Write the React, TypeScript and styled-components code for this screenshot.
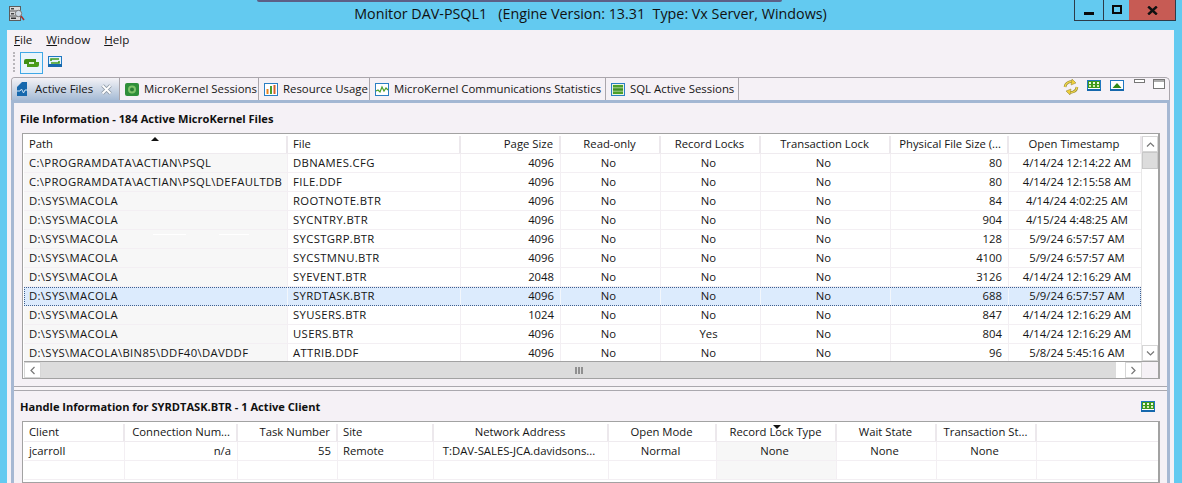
import React from "react";
import styled, { createGlobalStyle } from "styled-components";

const Global = createGlobalStyle`
  html, body { margin: 0; padding: 0; width: 1182px; height: 483px; overflow: hidden; background: #63caf0; }
  body { font-family: "Open Sans", "Liberation Sans", sans-serif; font-size: 11.3px; color: #151515; }
  * { box-sizing: border-box; }
`;

const Window = styled.div`display: flex; flex-direction: column; height: 483px; overflow: hidden; position: relative;`;
const Sliver = styled.div`position: absolute; left: 257px; top: 0; width: 525px; height: 2px; background: #5d5f86; border-radius: 0 0 2px 2px;`;
const TitleBar = styled.header`
  height: 30px; flex: none; display: grid; grid-template-columns: 1fr auto 1fr; align-items: start;
`;
const AppIcon = styled.div`padding: 6px 0 0 9px; line-height: 0;`;
const Title = styled.h1`
  margin: 0 1px 0 0; padding-top: 4px; font-size: 14.3px; line-height: 20px; font-weight: 400; color: #111; white-space: pre;
`;
const Controls = styled.div`justify-self: end; display: flex; height: 21px; margin-right: 6px; border: 1px solid #2d3b48; border-top: 0;`;
const Ctrl = styled.div<{ $w: number; $close?: boolean }>`
  width: ${p => p.$w}px; display: flex; align-items: center; justify-content: center;
  background: ${p => (p.$close ? "#c75b54" : "transparent")};
  border-left: ${p => (p.$close ? 0 : "1px solid #2d3b48")};
  &:first-child { border-left: 0; }
`;
const Body = styled.main`flex: 1; min-height: 0; margin: 0 8px 0 7px; background: #f5f1f6; display: flex; flex-direction: column; overflow: hidden;`;
const Menu = styled.nav`height: 20px; flex: none; display: flex; gap: 14px; padding: 0 0 2px 7px; align-items: center; font-size: 11.6px;`;
const MenuItem = styled.span`u { text-underline-offset: 1px; }`;
const Toolbar = styled.div`height: 24px; flex: none; display: flex; align-items: flex-start; padding: 2px 0 0 6px;`;
const Grip = styled.div`width: 3px; height: 20px; margin-right: 4px; border-left: 2px dotted #b9b6bb;`;
const ToolBtn = styled.div<{ $on?: boolean }>`
  width: 23px; height: 22px; display: flex; align-items: center; justify-content: center; line-height: 0;
  ${p => p.$on ? "border: 1px solid #3fa8e6; background: #e9f4fb;" : "margin-top: -2px;"}
`;

const Folder = styled.section`flex: 1; min-height: 0; margin: 3px 4px 0 4px; display: flex; flex-direction: column;`;
const TabBar = styled.div`
  height: 23px; flex: none; display: flex; border-top: 1px solid #aaa6ac; border-right: 1px solid #aaa6ac; border-radius: 4px 5px 0 0;
  border-left: 1px solid #aaa6ac;
`;
const Tab = styled.div<{ $w: number; $active?: boolean }>`
  width: ${p => p.$w}px; flex: none; display: flex; align-items: center; gap: ${p => p.$active ? 6 : 5}px; padding-left: 5px; white-space: nowrap;
  border-right: 1px solid #aaa6ac; font-size: 11.4px;
  ${p => p.$active ? "background: linear-gradient(#f3f2f6, #a6bcd6); border-radius: 3px 0 0 0;" : ""}
`;
const TabLabel = styled.span`margin-top: -1px;`;
const TabActions = styled.div`flex: 1; display: flex; justify-content: flex-end; align-items: flex-start; padding: 1px 4px 0 0; line-height: 0;`;
const ActionIcon = styled.span<{ $ml?: number; $mt?: number }>`margin-left: ${p => p.$ml ?? 0}px; margin-top: ${p => p.$mt ?? 0}px;`;
const BlueBar = styled.div`height: 3px; flex: none; background: #a3b7d3;`;
const Panel = styled.div`flex: 1; min-height: 0; display: flex; flex-direction: column; border-left: 3px solid #a6b8d3; border-right: 3px solid #a6b8d3; overflow: hidden;`;
const PanelHead = styled.div<{ $h: number }>`
  height: ${p => p.$h}px; flex: none; display: flex; align-items: center; justify-content: space-between; padding: 0 12px 0 6px;
`;
const PanelTitle = styled.h2`margin: 0; font-size: 11.1px; font-weight: 700; color: #111;`;
const Frame = styled.div<{ $h?: number }>`
  margin: 0 7px 0 8px; border: 1px solid #a2a2a2; border-width: 1px 2px 1px 1px; padding: 2px 0 0 1px; background: #fff;
  display: flex; flex-direction: column;
  ${p => p.$h ? `height: ${p.$h}px; flex: none;` : "flex: 1; min-height: 0;"}
  overflow: hidden;
`;
const TableRow = styled.div`display: flex; flex: 1; min-height: 0;`;
const Grid = styled.div`flex: 1; min-width: 0; display: flex; flex-direction: column;`;
const HeadRow = styled.div`height: 18px; flex: none; display: flex; position: relative; border-bottom: 1px solid #efebef;`;
const HeadCell = styled.div<{ $w: number; $al?: string }>`
  width: ${p => p.$w}px; flex: none; padding: 0 6px 0 5px; text-align: ${p => p.$al ?? "left"}; line-height: 16px; white-space: nowrap;
  border-right: 2px solid #ece8ec; overflow: hidden;
`;
const Arrow = styled.div<{ $x: number; $down?: boolean }>`
  position: absolute; left: ${p => p.$x}px; top: 1px; width: 0; height: 0; border-left: 4px solid transparent; border-right: 4px solid transparent;
  ${p => p.$down ? "border-top: 4px solid #111;" : "border-bottom: 4px solid #111;"}
`;
const Rows = styled.div`flex: 1; min-height: 0; overflow: hidden;`;
const Row = styled.div<{ $sel?: boolean }>`
  height: 19px; display: flex; border-bottom: 1px solid #f3eff3;
  ${p => p.$sel ? "background: #dcebfd; outline: 1px dotted #3f5f8f; outline-offset: -1px; border-bottom-color: transparent;" : ""}
`;
const Cell = styled.div<{ $w: number; $al?: string; $shade?: boolean; $sel?: boolean; $track?: boolean; $flip?: boolean }>`
  width: ${p => p.$w}px; flex: none; text-align: ${p => p.$al ?? "left"}; line-height: 17px; white-space: nowrap; overflow: hidden;
  padding: ${p => p.$flip ? "0 5px 0 9px" : `0 ${p.$al === "center" ? 9 : 6}px 0 5px`};
  letter-spacing: ${p => p.$track ? "0.35px" : "0"};
  border-right: 1px solid ${p => p.$sel ? "#f2f6fc" : "#f3eff3"};
  ${p => p.$shade && !p.$sel ? "background: #f7f7f7;" : ""}
`;
const VScroll = styled.div`width: 17px; flex: none; display: flex; flex-direction: column; background: #fff; border-left: 1px solid #e8e8e8;`;
const SBtn = styled.div<{ $w?: number; $h?: number }>`
  width: ${p => p.$w ? p.$w + "px" : "auto"}; height: ${p => p.$h ? p.$h + "px" : "auto"}; flex: none; display: flex; align-items: center; justify-content: center;
  background: #fff; border: 1px solid #d6d6d6; line-height: 0;
`;
const VThumb = styled.div`height: 17px; flex: none; background: #dcdcdc; border: 1px solid #c8c8c8;`;
const VTrack = styled.div`flex: 1;`;
const HBar = styled.div`height: 17px; flex: none; display: flex; background: #f5f1f6; border-top: 1px solid #a2a2a2;`;
const HGroup = styled.div`width: 1118px; flex: none; display: flex; background: #fff;`;
const HThumb = styled.div`width: 1075px; flex: none; background: #dcdcdc; display: flex; align-items: center; justify-content: center; line-height: 0;`;
const HTrack = styled.div`flex: 1;`;
const Sash = styled.div`height: 12px; flex: none; padding-top: 7px;`;
const SashBand = styled.div`height: 5px; border-top: 1px solid #aaa8ae; border-bottom: 1px solid #aaa8ae; background: #f8f5f8;`;
const Smudge = styled.span<{ $x: number; $w: number }>`position: absolute; left: ${p => p.$x}px; top: 4px; width: ${p => p.$w}px; height: 1px; background: #fff;`;
const SmudgeRow = styled.div`position: relative; height: 0;`;

const NO = "No";
const files: string[][] = [
  ["C:\\PROGRAMDATA\\ACTIAN\\PSQL", "DBNAMES.CFG", "4096", NO, NO, NO, "80", "4/14/24 12:14:22 AM"],
  ["C:\\PROGRAMDATA\\ACTIAN\\PSQL\\DEFAULTDB", "FILE.DDF", "4096", NO, NO, NO, "80", "4/14/24 12:15:58 AM"],
  ["D:\\SYS\\MACOLA", "ROOTNOTE.BTR", "4096", NO, NO, NO, "84", "4/14/24 4:02:25 AM"],
  ["D:\\SYS\\MACOLA", "SYCNTRY.BTR", "4096", NO, NO, NO, "904", "4/15/24 4:48:25 AM"],
  ["D:\\SYS\\MACOLA", "SYCSTGRP.BTR", "4096", NO, NO, NO, "128", "5/9/24 6:57:57 AM"],
  ["D:\\SYS\\MACOLA", "SYCSTMNU.BTR", "4096", NO, NO, NO, "4100", "5/9/24 6:57:57 AM"],
  ["D:\\SYS\\MACOLA", "SYEVENT.BTR", "2048", NO, NO, NO, "3126", "4/14/24 12:16:29 AM"],
  ["D:\\SYS\\MACOLA", "SYRDTASK.BTR", "4096", NO, NO, NO, "688", "5/9/24 6:57:57 AM"],
  ["D:\\SYS\\MACOLA", "SYUSERS.BTR", "1024", NO, NO, NO, "847", "4/14/24 12:16:29 AM"],
  ["D:\\SYS\\MACOLA", "USERS.BTR", "4096", NO, "Yes", NO, "804", "4/14/24 12:16:29 AM"],
  ["D:\\SYS\\MACOLA\\BIN85\\DDF40\\DAVDDF", "ATTRIB.DDF", "4096", NO, NO, NO, "96", "5/8/24 5:45:16 AM"],
];
const fileCols = [
  { t: "Path", w: 264, al: "left" }, { t: "File", w: 173, al: "left" }, { t: "Page Size", w: 100, al: "right" },
  { t: "Read-only", w: 100, al: "center" }, { t: "Record Locks", w: 100, al: "center" }, { t: "Transaction Lock", w: 130, al: "center" },
  { t: "Physical File Size (...", w: 118, al: "right" }, { t: "Open Timestamp", w: 133, al: "center" },
];
const handleCols = [
  { t: "Client", w: 101, al: "left" }, { t: "Connection Num...", w: 113, al: "right" }, { t: "Task Number", w: 100, al: "right" },
  { t: "Site", w: 96, al: "left" }, { t: "Network Address", w: 175, al: "center" }, { t: "Open Mode", w: 108, al: "center" },
  { t: "Record Lock Type", w: 120, al: "center" }, { t: "Wait State", w: 100, al: "center" }, { t: "Transaction St...", w: 100, al: "center" },
];
const handles = [
  ["jcarroll", "n/a", "55", "Remote", "T:DAV-SALES-JCA.davidsons...", "Normal", "None", "None", "None"],
  ["", "", "", "", "", "", "", "", ""],
];

const BlueFrame = ({ children, w = 14, h = 11 }: { children: React.ReactNode; w?: number; h?: number }) => (
  <svg width={w} height={h} viewBox={`0 0 ${w} ${h}`}>
    <rect x=".5" y=".5" width={w - 1} height={h - 1} fill="#fff" stroke="#1f78c1" />
    <rect x="0" y={h - 2} width={w} height="2" fill="#1668ad" />
    {children}
  </svg>
);
const LoopBig = () => (
  <svg width="15" height="8" viewBox="0 0 15 8">
    <path d="M2 0h10v3H5v2H0V2q0-2 2-2Z" fill="#3f8f12" />
    <path d="M13 8H3V5h7V3h5v3q0 2-2 2Z" fill="#4a9c1a" />
    <path d="M5.500 4h4" stroke="#c4e2a6" />
  </svg>
);
const TableIcon = () => (
  <BlueFrame w={14} h={11}>
    <rect x="1" y="1" width="12" height="7" fill="#3f9a1c" />
    {[2, 6, 10].map(x => <rect key={x} x={x} y="2" width="2" height="2" fill="#f0f8e0" />)}
    {[2, 6, 10].map(x => <rect key={x} x={x} y="5" width="2" height="2" fill="#d5ebb0" />)}
  </BlueFrame>
);

export default function App() {
  return (
    <Window>
      <Global />
      <Sliver />
      <TitleBar>
        <AppIcon>
          <svg width="17" height="16" viewBox="0 0 17 16">
            <rect x=".5" y=".5" width="11" height="14" fill="#d9d9d9" stroke="#5c5c5c" />
            <path d="M1 5h10M1 10h10" stroke="#5c5c5c" />
            <rect x="2" y="2" width="3" height="1.500" fill="#444" /><rect x="2" y="7" width="3" height="1.500" fill="#444" /><rect x="2" y="11.500" width="5" height="1.500" fill="#333" />
            <circle cx="9.500" cy="7.500" r="3.200" fill="#cfd9e2" stroke="#777" />
            <path d="M12 10l3 4" stroke="#a8322c" strokeWidth="1.500" />
          </svg>
        </AppIcon>
        <Title>{"Monitor DAV-PSQL1   (Engine Version: 13.31  Type: Vx Server, Windows)"}</Title>
        <Controls>
          <Ctrl $w={28}><svg width="10" height="10" viewBox="0 0 10 10"><rect y="7" width="10" height="3" fill="#0a0a0a" /></svg></Ctrl>
          <Ctrl $w={26}><svg width="10" height="10" viewBox="0 0 10 10"><rect x="1" y="1" width="8" height="7" fill="none" stroke="#0a0a0a" strokeWidth="2" /></svg></Ctrl>
          <Ctrl $w={46} $close><svg width="11" height="9" viewBox="0 0 11 9"><path d="M1.200 .5l8.600 8M9.800 .5l-8.600 8" stroke="#111" strokeWidth="2.400" /></svg></Ctrl>
        </Controls>
      </TitleBar>
      <Body>
        <Menu>
          <MenuItem><u>F</u>ile</MenuItem>
          <MenuItem><u>W</u>indow</MenuItem>
          <MenuItem><u>H</u>elp</MenuItem>
        </Menu>
        <Toolbar>
          <Grip />
          <ToolBtn $on><LoopBig /></ToolBtn>
          <ToolBtn>
            <svg width="14" height="11" viewBox="0 0 14 11">
              <rect x=".5" y=".5" width="13" height="10" fill="#e3f3fb" stroke="#1f78c1" />
              <rect y="8" width="14" height="3" fill="#1668ad" />
              <path d="M3 5V3h8M11 5v2H3" fill="none" stroke="#3f9a1c" strokeWidth="1.600" />
            </svg>
          </ToolBtn>
        </Toolbar>
        <Folder>
          <TabBar>
            <Tab $w={108} $active>
              <svg width="12" height="14" viewBox="0 0 12 14">
                <path d="M0 5l5-5h5v14H0Z" fill="#1668ad" />
                <path d="M0 9h3l1.500-2 2 4L8 8h3" fill="none" stroke="#cfe3f3" />
              </svg>
              <TabLabel>Active Files</TabLabel>
              <svg width="11" height="11" viewBox="0 0 11 11" style={{ marginLeft: 2 }}>
                <path d="M1.500 1.500l8 8M9.500 1.500l-8 8" stroke="#8f9aa6" strokeWidth="3.600" />
                <path d="M1.500 1.500l8 8M9.500 1.500l-8 8" stroke="#fff" strokeWidth="1.800" />
              </svg>
            </Tab>
            <Tab $w={139}>
              <svg width="14" height="13" viewBox="0 0 14 13">
                <rect width="14" height="13" rx="2" fill="#2f8f3a" />
                <circle cx="7" cy="6.500" r="4" fill="#7fc36a" />
                <circle cx="7" cy="6.500" r="2" fill="#2a7f35" />
              </svg>
              <TabLabel>MicroKernel Sessions</TabLabel>
            </Tab>
            <Tab $w={111}>
              <svg width="14" height="13" viewBox="0 0 14 13">
                <rect x=".5" y=".5" width="13" height="12" fill="#fff" stroke="#2a7fc4" />
                <rect x="2.500" y="6" width="2" height="5" fill="#e8821e" /><rect x="6" y="3" width="2" height="8" fill="#4c9f2a" /><rect x="9.500" y="2" width="2" height="9" fill="#d8602a" />
              </svg>
              <TabLabel>Resource Usage</TabLabel>
            </Tab>
            <Tab $w={236}>
              <svg width="14" height="13" viewBox="0 0 14 13">
                <rect x=".5" y=".5" width="13" height="12" fill="#fff" stroke="#2a7fc4" />
                <path d="M1 8l2-1 2 2 2-5 2 4 2-3 2 2" fill="none" stroke="#4c9f2a" strokeWidth="1.200" />
              </svg>
              <TabLabel>MicroKernel Communications Statistics</TabLabel>
            </Tab>
            <Tab $w={133}>
              <svg width="14" height="13" viewBox="0 0 14 13">
                <rect x=".5" y=".5" width="13" height="12" fill="#e8f3e0" stroke="#2a7fc4" />
                <rect x="2" y="2" width="10" height="2.600" fill="#4c9f2a" /><rect x="2" y="5.200" width="10" height="2.600" fill="#3f8f22" /><rect x="2" y="8.400" width="10" height="2.600" fill="#4c9f2a" />
              </svg>
              <TabLabel>SQL Active Sessions</TabLabel>
            </Tab>
            <TabActions>
              <ActionIcon>
                <svg width="16" height="16" viewBox="0 0 16 16">
                  <path d="M2 8a6 6 0 0 1 9-4.500M14 8a6 6 0 0 1-9 4.500" fill="none" stroke="#9a8f3a" strokeWidth="2.600" />
                  <path d="M2 8a6 6 0 0 1 9-4.500M14 8a6 6 0 0 1-9 4.500" fill="none" stroke="#f4d94a" strokeWidth="1.200" />
                  <path d="M9 0l4 4-5 2Z M7 16l-4-4 5-2Z" fill="#f0cf3a" stroke="#8f8232" strokeWidth=".5" />
                </svg>
              </ActionIcon>
              <ActionIcon $ml={8} $mt={1}><TableIcon /></ActionIcon>
              <ActionIcon $ml={9} $mt={1}>
                <BlueFrame><path d="M2.500 8L7 3l4.500 5Z" fill="#2f8a18" /></BlueFrame>
              </ActionIcon>
              <ActionIcon $ml={10}><svg width="11" height="4" viewBox="0 0 11 4"><rect x=".5" y=".5" width="10" height="3" fill="#fff" stroke="#777" /></svg></ActionIcon>
              <ActionIcon $ml={8}><svg width="12" height="10" viewBox="0 0 12 10"><rect x=".5" y=".5" width="11" height="9" fill="#fff" stroke="#777" /><rect y="0" width="12" height="3" fill="#777" opacity=".6" /></svg></ActionIcon>
            </TabActions>
          </TabBar>
          <BlueBar />
          <Panel>
            <PanelHead $h={30}><PanelTitle>File Information - 184 Active MicroKernel Files</PanelTitle></PanelHead>
            <Frame $h={246}>
              <TableRow>
                <Grid>
                  <HeadRow>
                    {fileCols.map(c => <HeadCell key={c.t} $w={c.w} $al={c.al}>{c.t}</HeadCell>)}
                    <Arrow $x={127} />
                  </HeadRow>
                  <Rows>
                    {files.map((r, i) => (
                      <React.Fragment key={i}>
                        {i === 4 && <SmudgeRow><Smudge $x={129} $w={33} /><Smudge $x={195} $w={30} /></SmudgeRow>}
                        <Row $sel={i === 7}>
                          {r.map((v, j) => (
                            <Cell key={j} $w={fileCols[j].w} $al={fileCols[j].al} $shade={j === 0} $sel={i === 7} $track={j < 2} $flip={j === 7}>{v}</Cell>
                          ))}
                        </Row>
                      </React.Fragment>
                    ))}
                  </Rows>
                </Grid>
                <VScroll>
                  <SBtn $h={16}><svg width="9" height="5" viewBox="0 0 9 5"><path d="M1 4.500l3.500-3.500L8 4.500" fill="none" stroke="#777" strokeWidth="1.200" /></svg></SBtn>
                  <VThumb />
                  <VTrack />
                  <SBtn $h={16}><svg width="9" height="5" viewBox="0 0 9 5"><path d="M1 .5L4.500 4 8 .5" fill="none" stroke="#777" strokeWidth="1.200" /></svg></SBtn>
                </VScroll>
              </TableRow>
              <HBar>
                <HGroup>
                  <SBtn $w={17}><svg width="5" height="9" viewBox="0 0 5 9"><path d="M4.500 1L1 4.500 4.500 8" fill="none" stroke="#777" strokeWidth="1.200" /></svg></SBtn>
                  <HThumb>
                    <svg width="8" height="7" viewBox="0 0 8 7"><path d="M1 0v7M4 0v7M7 0v7" stroke="#777" strokeWidth="1.500" /></svg>
                  </HThumb>
                  <HTrack />
                  <SBtn $w={17}><svg width="5" height="9" viewBox="0 0 5 9"><path d="M.5 1L4 4.500 .5 8" fill="none" stroke="#777" strokeWidth="1.200" /></svg></SBtn>
                </HGroup>
              </HBar>
            </Frame>
            <Sash><SashBand /></Sash>
            <PanelHead $h={30}>
              <PanelTitle>Handle Information for SYRDTASK.BTR - 1 Active Client</PanelTitle>
              <TableIcon />
            </PanelHead>
            <Frame>
              <HeadRow>
                {handleCols.map(c => <HeadCell key={c.t} $w={c.w} $al={c.al}>{c.t}</HeadCell>)}
                <Arrow $x={749} $down />
              </HeadRow>
              <Rows>
                {handles.map((r, i) => (
                  <Row key={i}>
                    {r.map((v, j) => <Cell key={j} $w={handleCols[j].w} $al={handleCols[j].al} $shade={j === 6}>{v}</Cell>)}
                  </Row>
                ))}
              </Rows>
            </Frame>
          </Panel>
        </Folder>
      </Body>
    </Window>
  );
}
